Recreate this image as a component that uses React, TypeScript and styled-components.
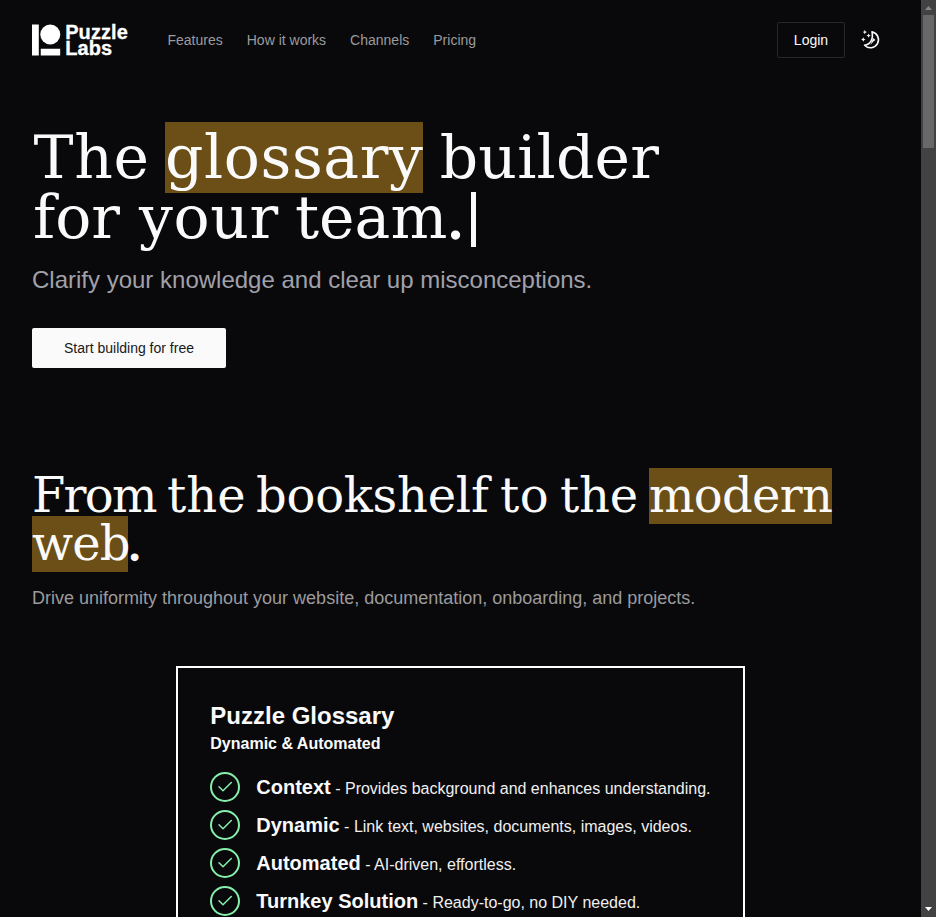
import React from "react";
import styled, { createGlobalStyle } from "styled-components";

const Global = createGlobalStyle`
  *{box-sizing:border-box}
  html,body{margin:0;background:#09090b;overflow:hidden}
  body{font-family:"Liberation Sans",Arial,sans-serif;color:#fafafa}
  h1,h2,h3,p,ul{margin:0;padding:0}
`;
const Shell = styled.div`display:flex;width:936px;height:917px;overflow:hidden;background:#09090b;`;
const Page = styled.div`flex:1;min-width:0;overflow:hidden;`;
const Header = styled.header`display:flex;align-items:center;height:80px;padding:0 40px 0 32px;`;
const Logo = styled.div`display:flex;gap:4px;width:96px;margin-right:39.5px;height:32px;align-items:center;`;
const LogoText = styled.div`font:700 20px/16px "Liberation Sans",Arial,sans-serif;color:#fff;-webkit-text-stroke:.3px #fff;letter-spacing:.1px;`;
const Nav = styled.nav`display:flex;gap:24px;flex:1;`;
const NavLink = styled.a`font-size:14px;line-height:20px;color:#9b9b9e;`;
const Login = styled.button`width:68px;height:36px;border:1px solid #27272a;border-radius:2px;background:transparent;color:#fafafa;font:14px "Liberation Sans",sans-serif;padding:0;margin-right:16px;`;
const Hero = styled.section`padding:47px 32px 0;height:392px;`;
const Title = styled.h1<{ $size: number }>`
  font:400 ${p => p.$size}px/${p => p.$size}px "DejaVu Serif",serif;
  color:#fafafa;
`;
const Line = styled.span<{ $h: number }>`display:flex;align-items:center;height:${p => p.$h}px;white-space:pre;`;
const Word = styled.span<{ $w: number; $ls?: number; $indent?: number; $lift?: number }>`
  flex:none;
  width:${p => p.$w}px;
  letter-spacing:${p => p.$ls ?? 0}px;
  text-indent:${p => p.$indent ?? 0}px;
  padding-bottom:${p => p.$lift ?? 0}px;
`;
const Stop = styled(Word)`-webkit-text-stroke:1.4px #fafafa;`;
const Mark = styled(Word)<{ $h: number }>`
  height:${p => p.$h}px;
  line-height:${p => p.$h - (p.$lift ?? 0)}px;
  background:#6b4f16;
`;
const Caret = styled.span`width:5px;height:55px;background:#fafafa;align-self:flex-end;`;
const Lead = styled.p`font-size:24px;line-height:32px;color:#a1a1aa;margin-top:17px;`;
const Cta = styled.button`margin-top:32px;width:194px;height:40px;border:0;border-radius:2px;background:#fafafa;color:#18181b;font:14px "Liberation Sans",sans-serif;display:block;`;
const Section = styled.section`padding:0 32px;`;
const Sub = styled.p`font-size:18px;line-height:28px;color:#9b9b9e;margin-top:16px;`;
const Card = styled.article`width:569px;height:400px;margin:54px 0 0 144px;border:2px solid #fff;padding:32px;`;
const CardTitle = styled.h3`font-size:24px;line-height:32px;padding-left:.3px;`;
const CardSub = styled.p`font-size:16px;line-height:24px;font-weight:700;padding-left:.3px;`;
const List = styled.ul`list-style:none;margin-top:16px;display:grid;gap:8px;`;
const Item = styled.li`display:flex;align-items:center;gap:16.3px;height:30px;white-space:nowrap;font-size:16px;color:#f0f0f0;`;
const Strong = styled.strong`font-size:20px;color:#fafafa;`;
const Bar = styled.aside`width:15px;display:flex;flex-direction:column;align-items:center;background:#424242;`;
const Thumb = styled.div`width:11px;height:133px;background:#686868;`;
const Arrow = styled.svg`width:15px;height:15px;display:block;`;
const Spacer = styled.div`flex:1;`;

const Check = () => (
  <svg width="30" height="30" viewBox="0 0 30 30" fill="none" stroke="#86efac">
    <circle cx="15" cy="15" r="14" strokeWidth="2" />
    <path d="M9 14.8l4 4 8.3-8.3" strokeWidth="1.5" strokeLinecap="round" strokeLinejoin="round" />
  </svg>
);

const MoonStars = () => (
  <svg width="20" height="20" viewBox="0 0 20 20" fill="#fafafa">
    <path d="M11 1.9a8 8 0 1 1-7.4 13.3c5.6-.6 9-6 7.4-13.3z" fill="none" stroke="#fafafa" strokeWidth="1.6" strokeLinejoin="round" />
    <path d="M12.2 7.9l2.2 2.2-2 1.4-3 3.4z" />
    <path d="M3.8-.1l.7 1.5 1.5.7-1.5.7-.7 1.5-.7-1.5-1.5-.7 1.5-.7zM7.6 3.4l.7 1.5 1.5.7-1.5.7-.7 1.5-.7-1.5-1.5-.7 1.5-.7zM2.3 7.3L3 8.8l1.5.7-1.5.7-.7 1.5-.7-1.5-1.5-.7 1.5-.7z" />
  </svg>
);

const items = [
  ["Context", "Provides background and enhances understanding."],
  ["Dynamic", "Link text, websites, documents, images, videos."],
  ["Automated", "AI-driven, effortless."],
  ["Turnkey Solution", "Ready-to-go, no DIY needed."],
];

export default function App() {
  return (
    <Shell>
      <Global />
      <Page>
        <Header>
          <Logo>
            <svg width="30" height="32" viewBox="0 0 30 32" fill="#fff"><path d="M0 0h7v32H0zM9 25h20v7H9z" /><circle cx="18.8" cy="10.3" r="10.3" /></svg>
            <LogoText>Puzzle<br />Labs</LogoText>
          </Logo>
          <Nav>{["Features", "How it works", "Channels", "Pricing"].map(t => <NavLink key={t}>{t}</NavLink>)}</Nav>
          <Login>Login</Login>
          <MoonStars />
        </Header>
        <Hero>
          <Title $size={60}>
            <Line $h={60}>
              <Word $w={133} $ls={0.7} $indent={1.5}>The </Word>
              <Mark $w={258} $ls={0.6} $h={71}>glossary</Mark>
              <Word $w={230} $ls={0.2} $indent={-2.6}> builder</Word>
            </Line>
            <Line $h={60}>
              <Word $w={106} $indent={1}>for </Word>
              <Word $w={157} $ls={0.6} $indent={1}>your </Word>
              <Word $w={151}>team</Word>
              <Stop $w={25}>.</Stop>
              <Caret />
            </Line>
          </Title>
          <Lead>Clarify your knowledge and clear up misconceptions.</Lead>
          <Cta>Start building for free</Cta>
        </Hero>
        <Section>
          <Title as="h2" $size={48}>
            <Line $h={48}>
              <Word $w={135} $ls={-1.7} $lift={2}>From </Word>
              <Word $w={89} $lift={2}>the </Word>
              <Word $w={244} $ls={-0.25} $lift={2}>bookshelf </Word>
              <Word $w={60} $ls={0.5} $lift={2}>to </Word>
              <Word $w={89} $ls={-0.2} $lift={2}>the </Word>
              <Mark $w={183} $ls={-0.7} $h={56} $lift={2}>modern</Mark>
            </Line>
            <Line $h={48}>
              <Mark $w={96} $ls={-0.9} $h={56} $lift={2}>web</Mark>
              <Stop $w={16} $indent={-1} $lift={2}>.</Stop>
            </Line>
          </Title>
          <Sub>Drive uniformity throughout your website, documentation, onboarding, and projects.</Sub>
          <Card>
            <CardTitle>Puzzle Glossary</CardTitle>
            <CardSub>Dynamic &amp; Automated</CardSub>
            <List>{items.map(([a, b]) => <Item key={a}><Check /><span><Strong>{a}</Strong> - {b}</span></Item>)}</List>
          </Card>
        </Section>
      </Page>
      <Bar>
        <Arrow viewBox="0 0 15 15"><path d="M4 10l3.5-4L11 10z" fill="#888" /></Arrow>
        <Thumb /><Spacer />
        <Arrow viewBox="0 0 15 15"><path d="M4 5h7l-3.5 4z" fill="#fff" /></Arrow>
      </Bar>
    </Shell>
  );
}
